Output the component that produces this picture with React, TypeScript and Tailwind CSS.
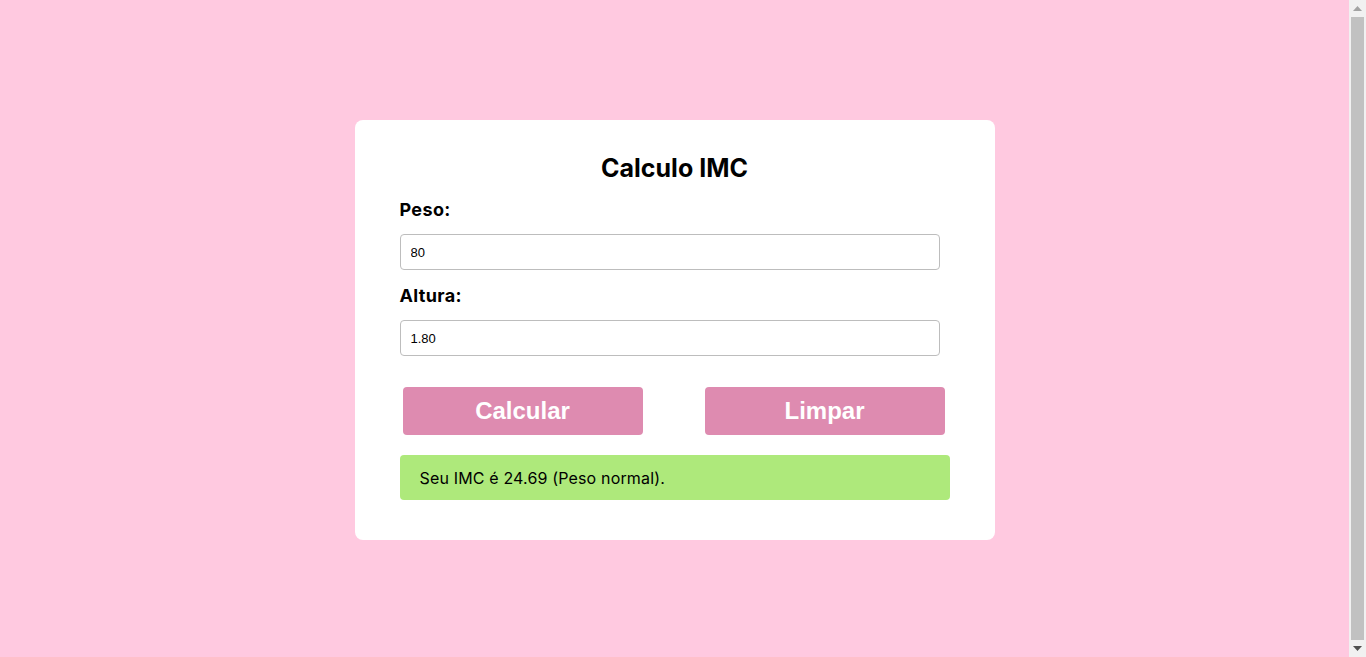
export default function App() {
  return (
    <div className="flex h-screen bg-[#ffc9e0] font-['Inter',sans-serif]">
      <div className="flex flex-1 items-center justify-center pt-[3px]">
        <div className="w-[640px] rounded-lg bg-white px-[45px] pb-10 pt-[30px]">
          <h1 className="text-center text-[25px] font-bold leading-9 text-black">Calculo IMC</h1>
          <form className="mt-[10px]" onSubmit={(e) => e.preventDefault()}>
            <label className="block text-[18px] font-bold leading-7 tracking-[0.02em] text-black">Peso:</label>
            <input
              type="text"
              defaultValue="80"
              className="mt-[10px] h-9 w-[540px] rounded-[4px] border border-[#bdbdbd] bg-white px-[10px] font-['Liberation_Sans',sans-serif] text-[13px] text-black outline-none"
            />
            <label className="mt-3 block text-[18px] font-bold leading-7 tracking-[0.02em] text-black">Altura:</label>
            <input
              type="text"
              defaultValue="1.80"
              className="mt-[10px] h-9 w-[540px] rounded-[4px] border border-[#bdbdbd] bg-white px-[10px] font-['Liberation_Sans',sans-serif] text-[13px] text-black outline-none"
            />
            <div className="mt-[31px] flex justify-between pl-[3px] pr-[5px]">
              <button className="h-12 w-[240px] rounded-[4px] bg-[#de8bb0] font-['Liberation_Sans',sans-serif] text-[24px] font-bold text-white">
                Calcular
              </button>
              <button className="h-12 w-[240px] rounded-[4px] bg-[#de8bb0] font-['Liberation_Sans',sans-serif] text-[24px] font-bold text-white">
                Limpar
              </button>
            </div>
          </form>
          <div className="mt-5 flex h-[45px] items-center rounded-[4px] bg-[#aee97b] px-5 text-[16px] tracking-[0.01em] text-black">
            Seu IMC é 24.69 (Peso normal).
          </div>
        </div>
      </div>
      {/* scrollbar */}
      <div className="flex w-[17px] flex-col bg-[#f1f1f1]">
        <div className="flex h-[17px] items-center justify-center">
          <svg width="9" height="5" viewBox="0 0 9 5"><path d="M4.5 0L9 5H0z" fill="#a3a3a3" /></svg>
        </div>
        <div className="mx-[2px] flex-1 bg-[#c1c1c1]" />
        <div className="flex h-[17px] items-center justify-center">
          <svg width="9" height="5" viewBox="0 0 9 5"><path d="M0 0h9L4.5 5z" fill="#505050" /></svg>
        </div>
      </div>
    </div>
  );
}
